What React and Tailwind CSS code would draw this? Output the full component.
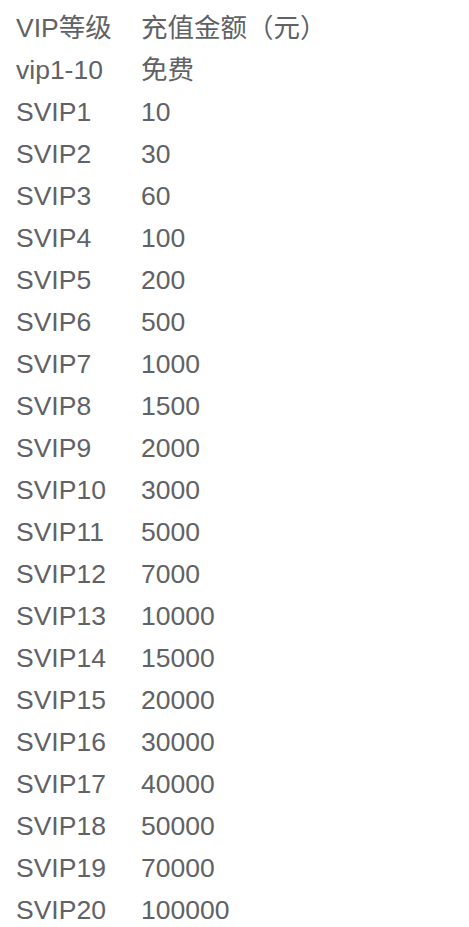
const ROWS = [
  ['vip1-10', '免费'],
  ['SVIP1', '10'],
  ['SVIP2', '30'],
  ['SVIP3', '60'],
  ['SVIP4', '100'],
  ['SVIP5', '200'],
  ['SVIP6', '500'],
  ['SVIP7', '1000'],
  ['SVIP8', '1500'],
  ['SVIP9', '2000'],
  ['SVIP10', '3000'],
  ['SVIP11', '5000'],
  ['SVIP12', '7000'],
  ['SVIP13', '10000'],
  ['SVIP14', '15000'],
  ['SVIP15', '20000'],
  ['SVIP16', '30000'],
  ['SVIP17', '40000'],
  ['SVIP18', '50000'],
  ['SVIP19', '70000'],
  ['SVIP20', '100000'],
];

export default function App() {
  return (
    <div className="min-h-screen bg-white pt-[7px] pl-4 text-[#606266] text-[26.5px] leading-[42px] font-['Liberation_Sans','Noto_Sans_CJK_SC',sans-serif]">
      <div className="grid grid-cols-[125px_1fr]">
        <div>VIP等级</div>
        <div>充值金额（元）</div>
        {ROWS.map(([level, amount]) => (
          <div key={level} className="contents">
            <div>{level}</div>
            <div>{amount}</div>
          </div>
        ))}
      </div>
    </div>
  );
}
